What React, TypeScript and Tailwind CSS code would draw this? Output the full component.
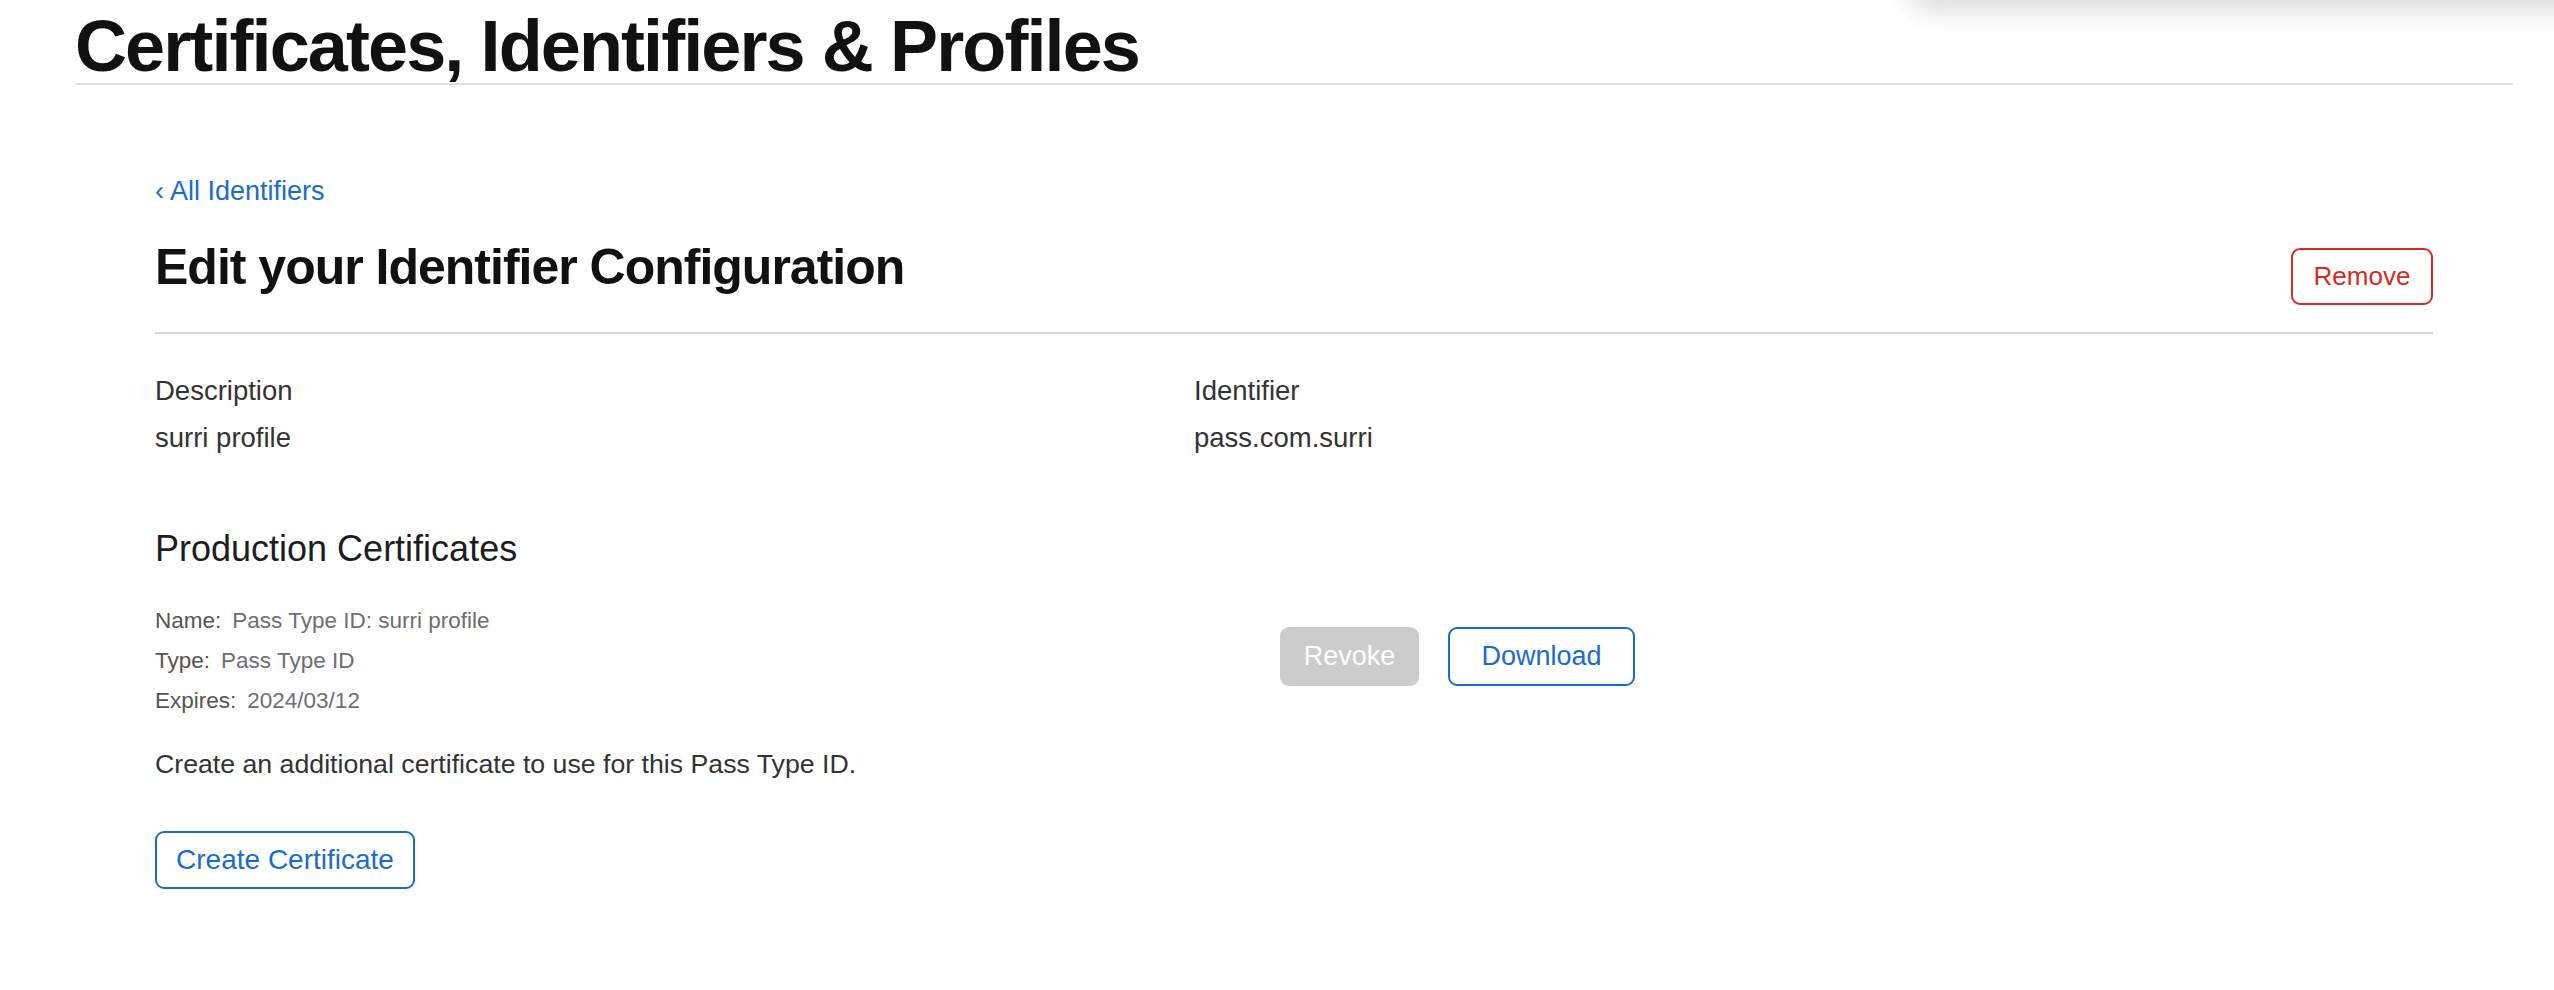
export default function App() {
  return (
    <div className="relative min-h-screen overflow-hidden bg-white pl-[75px] pr-[41px] font-['Liberation_Sans',Arial,sans-serif] text-[#1d1d1f]">
      {/* floating menu sitting above the viewport, only its shadow shows */}
      <div className="absolute -top-[60px] left-[1910px] -right-[40px] h-[60px] rounded-2xl bg-white shadow-[0_8px_28px_rgba(0,0,0,0.16)]" />

      <header className="border-b-2 border-[#e1e1e1] pt-[10px] pb-[1px]">
        <h1 className="text-[72px] font-bold leading-[72px] tracking-[-1.9px] text-[#111]">
          Certificates, Identifiers &amp; Profiles
        </h1>
      </header>

      <main className="px-[80px]">
        <a href="#" className="mt-[90px] block text-[27px] leading-[32px] text-[#1a6dc7]">
          ‹ All Identifiers
        </a>

        <div className="mt-[32px] flex items-start justify-between border-b-2 border-[#d8d8d8] pb-[27px]">
          <h2 className="text-[50px] font-bold leading-[56px] tracking-[-1px] text-[#111]">
            Edit your Identifier Configuration
          </h2>
          <button className="mt-[9px] h-[57px] w-[142px] rounded-[9px] border-2 border-[#d42b24] text-[26px] text-[#d42b24]">
            Remove
          </button>
        </div>

        <div className="mt-[33px] grid grid-cols-[1039px_1fr] text-[27.5px] leading-[47px] text-[#333]">
          <div>
            <div>Description</div>
            <div>surri profile</div>
          </div>
          <div>
            <div>Identifier</div>
            <div>pass.com.surri</div>
          </div>
        </div>

        <h3 className="mt-[66px] text-[36px] leading-[44px] text-[#1d1d1f]">Production Certificates</h3>

        <div className="mt-[30px] flex items-start">
          <div className="w-[1125px] shrink-0 text-[22.5px] leading-[40px] text-[#6e6e73]">
            <div>
              <span className="mr-[11px] text-[#555]">Name:</span>Pass Type ID: surri profile
            </div>
            <div>
              <span className="mr-[11px] text-[#555]">Type:</span>Pass Type ID
            </div>
            <div>
              <span className="mr-[11px] text-[#555]">Expires:</span>2024/03/12
            </div>
          </div>
          <div className="mt-[26px] flex gap-[29px]">
            <button className="h-[59px] w-[139px] rounded-[9px] bg-[#cccccc] text-[27px] text-white">Revoke</button>
            <button className="h-[59px] w-[187px] rounded-[9px] border-2 border-[#1a6dc7] text-[27px] text-[#1a6dc7]">
              Download
            </button>
          </div>
        </div>

        <p className="mt-[23px] text-[26.7px] leading-[40px] text-[#333]">
          Create an additional certificate to use for this Pass Type ID.
        </p>

        <button className="mt-[47px] h-[58px] w-[260px] rounded-[9px] border-2 border-[#1a6dc7] text-[28px] text-[#1a6dc7]">
          Create Certificate
        </button>
      </main>
    </div>
  );
}
